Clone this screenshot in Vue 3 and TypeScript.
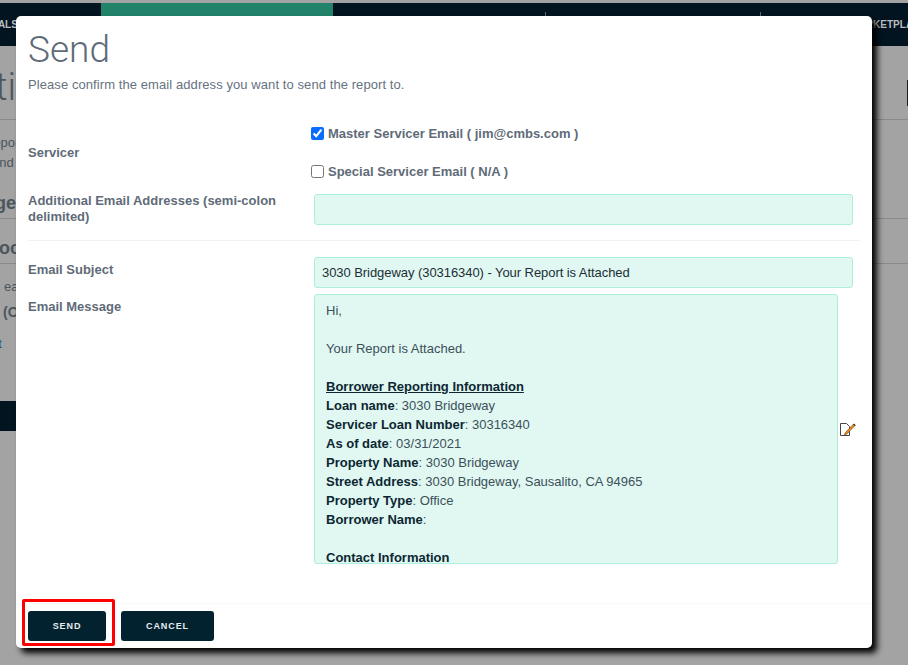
<script setup lang="ts">
interface Line { label?: string; value?: string; heading?: string; blank?: boolean }
const lines: Line[] = [
  { value: 'Hi,' },
  { blank: true },
  { value: 'Your Report is Attached.' },
  { blank: true },
  { heading: 'Borrower Reporting Information' },
  { label: 'Loan name', value: ': 3030 Bridgeway' },
  { label: 'Servicer Loan Number', value: ': 30316340' },
  { label: 'As of date', value: ': 03/31/2021' },
  { label: 'Property Name', value: ': 3030 Bridgeway' },
  { label: 'Street Address', value: ': 3030 Bridgeway, Sausalito, CA 94965' },
  { label: 'Property Type', value: ': Office' },
  { label: 'Borrower Name', value: ':' },
  { blank: true },
  { label: 'Contact Information' },
  { label: 'Contact Name', value: ':' }
]
</script>

<template>
  <div class="page">
    <header class="nav">
      <span class="nav-left">DEALS</span>
      <span class="nav-tab"></span>
      <i class="nav-sep sep-a"></i>
      <i class="nav-sep sep-b"></i>
      <span class="nav-right">MARKETPLACE</span>
    </header>
    <section class="bg-section bg-title"><span>Noti</span><i class="bg-block"></i></section>
    <section class="bg-section bg-intro">
      <p class="bg-l1">Report</p>
      <p class="bg-l2">and</p>
      <p class="bg-h2"><b>Page</b></p>
    </section>
    <section class="bg-section bg-h3"><b>Book</b></section>
    <section class="bg-copy">
      <p class="bg-p1">each</p>
      <p class="bg-p2"><b>(Ok)</b></p>
      <p class="bg-p3">Get</p>
    </section>
    <div class="bg-bar"></div>

    <div class="modal">
      <h1 class="title">Send</h1>
      <p class="intro">Please confirm the email address you want to send the report to.</p>

      <div class="row row-servicer">
        <div class="label">Servicer</div>
        <div class="checks">
          <label class="check"><input type="checkbox" checked /><span>Master Servicer Email ( jim@cmbs.com )</span></label>
          <label class="check"><input type="checkbox" /><span>Special Servicer Email ( N/A )</span></label>
        </div>
      </div>

      <div class="row row-additional">
        <div class="label">Additional Email Addresses (semi-colon delimited)</div>
        <div class="field"></div>
      </div>

      <div class="divider"></div>

      <div class="row row-subject">
        <div class="label">Email Subject</div>
        <div class="field field-text">3030 Bridgeway (30316340) - Your Report is Attached</div>
      </div>

      <div class="row row-message">
        <div class="label">Email Message</div>
        <div class="message">
          <div v-for="(line, i) in lines" :key="i" class="msg-line">
            <template v-if="line.blank">&nbsp;</template>
            <b v-else-if="line.heading" class="msg-heading">{{ line.heading }}</b>
            <template v-else><b v-if="line.label">{{ line.label }}</b>{{ line.value }}</template>
          </div>
        </div>
        <svg class="edit-icon" width="16" height="15" viewBox="0 0 16 15" aria-hidden="true">
          <path d="M.5 1.5h6l3 3v9H.5z" fill="#fff" stroke="#444" />
          <path d="M5.2 10.8 13.6 2l1.5 1.5-8.5 8.7-2.1.6z" fill="#ef8f1f" stroke="#7a4a12" stroke-width=".7" />
          <path d="M13.6 2l1.5 1.5" stroke="#333" stroke-width="1.2" />
        </svg>
      </div>

      <div class="footer">
        <div class="send-wrap">
          <button class="btn" type="button">SEND</button>
          <span class="highlight"></span>
        </div>
        <button class="btn btn-cancel" type="button">CANCEL</button>
      </div>
    </div>
  </div>
</template>

<style>
html, body { margin: 0; overflow: hidden; background: #a3a3a3; }
</style>

<style scoped>
* { box-sizing: border-box; }
.page {
  position: relative;
  width: 908px;
  height: 665px;
  overflow: hidden;
  background: #a3a3a3;
  padding-top: 3px;
  font-family: "Liberation Sans", Arial, sans-serif;
  color: #4b565e;
}
.nav {
  height: 43px;
  background: #02141f;
  display: flex;
  align-items: center;
  justify-content: space-between;
  position: relative;
  color: #b9bdbf;
  font-size: 10px;
  font-weight: 700;
}
.nav-left { margin-left: -16px; }
.nav-tab { position: absolute; left: 101px; top: 0; width: 232px; height: 14px; background: #22836b; }
.nav-sep { position: absolute; top: 9px; width: 1px; height: 5px; background: #5c666c; }
.sep-a { left: 545px; }
.sep-b { left: 760px; }
.nav-right { margin-right: -19px; }
.bg-section { border-bottom: 1px solid #8a8a8a; overflow: hidden; white-space: nowrap; }
.bg-section p, .bg-copy p { margin: 0; }
.bg-title {
  height: 74px;
  position: relative;
  font-family: Roboto, "Liberation Sans", sans-serif;
  font-size: 38px;
  line-height: 42px;
  font-weight: 300;
  padding-top: 20px;
  text-indent: -53px;
}
.bg-block { position: absolute; right: -2px; top: 34px; width: 3px; height: 26px; background: #1c1c1c; }
.bg-intro { height: 99px; font-size: 13px; padding-top: 13px; line-height: 20px; }
.bg-l1 { text-indent: -16px; }
.bg-l2 { text-indent: -8px; }
.bg-h2 { margin-top: 20px !important; font-size: 18px; text-indent: -27px; }
.bg-h3 { height: 45px; font-size: 18px; line-height: 20px; padding-top: 19px; text-indent: -14px; }
.bg-copy { height: 137px; font-size: 13px; line-height: 16px; white-space: nowrap; overflow: hidden; }
.bg-p1 { padding-top: 15px; text-indent: 4px; }
.bg-p2 { padding-top: 9px; font-size: 14px; text-indent: 3px; }
.bg-p3 { padding-top: 16px; color: #2b5a70; text-indent: -19px; }
.bg-bar { width: 20px; height: 30px; background: #02141f; }

.modal {
  position: absolute;
  left: 16px;
  top: 16px;
  width: 856px;
  height: 632px;
  background: #fff;
  border-radius: 5px;
  box-shadow: 5px 5px 6px #000;
  padding: 0 12px;
  color: #5f6b78;
}
.title {
  margin: 13px 0 0;
  font-family: Roboto, "Liberation Sans", sans-serif;
  font-size: 37px;
  line-height: 42px;
  font-weight: 300;
  color: #5f6b78;
}
.intro {
  margin: 6px 0 0;
  font-size: 13px;
  line-height: 16px;
  letter-spacing: .08px;
  color: #667280;
}
.row { display: flex; }
.label {
  width: 286px;
  flex: none;
  padding-right: 30px;
  font-size: 13px;
  line-height: 16px;
  font-weight: 700;
  color: #5f6b78;
}
.row-servicer { margin-top: 24px; height: 70px; align-items: center; }
.row-servicer .label { margin-top: 1px; }
.checks { margin-left: -3px; display: flex; flex-direction: column; gap: 22px; }
.check { display: flex; align-items: center; gap: 4px; height: 16px; font-size: 13px; font-weight: 700; color: #5f6b78; }
.check input { margin: 0; width: 13px; height: 13px; accent-color: #0a6cff; }
.row-additional { margin-top: 7px; height: 31px; }
.row-additional .label { margin-top: -1px; }
.field {
  width: 539px;
  height: 31px;
  background: #e0f8f1;
  border: 1px solid #aeeedd;
  border-radius: 3px;
}
.field-text { padding-left: 7px; font-size: 13px; line-height: 29px; letter-spacing: -.06px; color: #222e36; }
.divider { width: 832px; height: 1px; background: #f1f1f1; margin-top: 15px; }
.row-subject { margin-top: 16px; }
.row-subject .label, .row-message .label { margin-top: 5px; }
.row-message { margin-top: 6px; position: relative; }
.message {
  width: 524px;
  height: 270px;
  overflow: hidden;
  background: #e0f8f1;
  border: 1px solid #aeeedd;
  border-radius: 3px;
  padding: 6px 11px 0;
  font-size: 13px;
  line-height: 19px;
  color: #3d4f5a;
}
.message b { color: #0d2733; }
.msg-line { height: 19px; white-space: nowrap; }
.msg-heading { text-decoration: underline; }
.edit-icon { margin: 128px 0 0 2px; flex: none; }
.footer {
  position: absolute;
  left: 0;
  right: 0;
  bottom: 0;
  height: 45px;
  border-top: 1px solid #fafafa;
  padding: 7px 0 0 12px;
  display: flex;
  gap: 15px;
  align-items: flex-start;
}
.send-wrap { position: relative; }
.btn {
  display: block;
  height: 30px;
  width: 78px;
  padding: 0;
  border: 0;
  border-radius: 3px;
  background: #03222f;
  color: #e6ecef;
  font-family: "Liberation Sans", Arial, sans-serif;
  font-size: 9px;
  font-weight: 700;
  letter-spacing: .9px;
}
.btn-cancel { width: 93px; }
.highlight {
  position: absolute;
  left: -6px;
  top: -12px;
  width: 93px;
  height: 47px;
  border: 3px solid #f00;
  border-radius: 2px;
  pointer-events: none;
}
</style>
